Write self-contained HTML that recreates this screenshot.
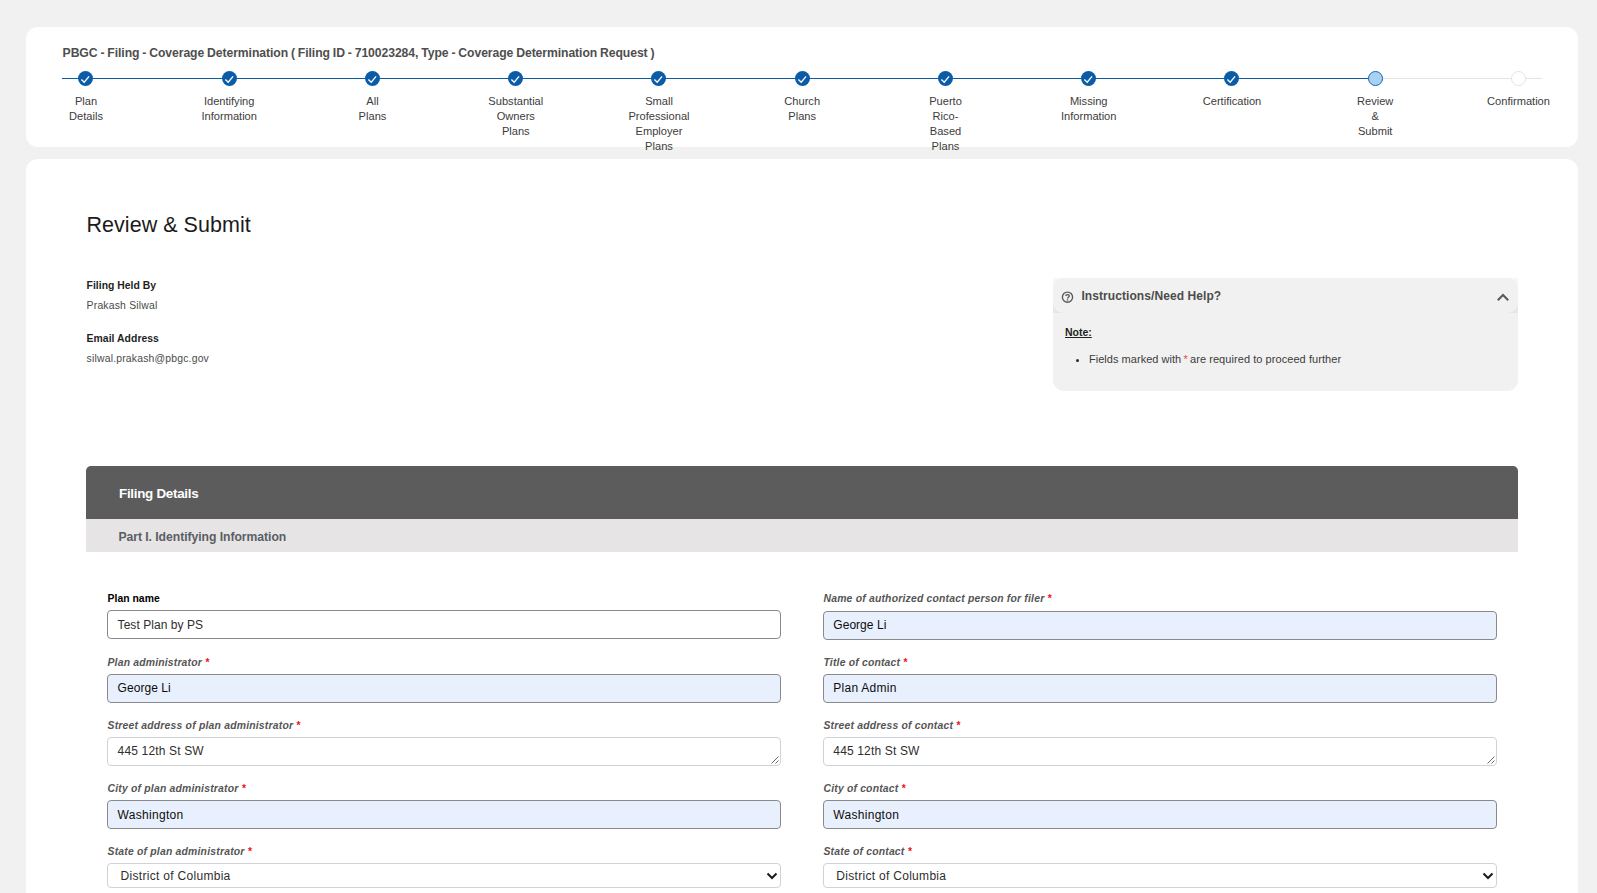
<!DOCTYPE html>
<html lang="en">
<head>
<meta charset="utf-8">
<title>Review &amp; Submit</title>
<style>
*{box-sizing:border-box;margin:0;padding:0}
html,body{width:1597px;height:893px;overflow:hidden;background:#f1f1f1;font-family:"Liberation Sans",sans-serif;color:#1b1b1b}
.abs{position:absolute}
.t{position:absolute;white-space:nowrap}
.card{position:absolute;background:#fff;border-radius:12px}
#c1{left:26px;top:27px;width:1552px;height:120px}
#c2{left:26px;top:158.5px;width:1552px;height:760px}
.ln{position:absolute;height:1.3px;top:77.8px}
.st{position:absolute;top:70.9px;width:15.2px;height:15.2px;border-radius:50%}
.st.done{background:#0b5ca6}
.st.cur{background:#a9d1f1;border:1.5px solid #1668b2}
.st.nxt{background:#fff;border:1.3px solid #e3e3e3}
.st svg{position:absolute;left:0;top:0}
.sl{position:absolute;top:94px;width:130px;text-align:center;font-size:11.1px;line-height:15px;color:#3c3c3c}
#hb{left:1053px;top:278px;width:465px;height:112.6px;background:#f1f1f1;border-radius:0 0 11px 11px}
#hh{left:1053px;top:278px;width:465px;height:34.7px;background:#f1f1f1;border-radius:10.5px}
#hg{left:1053px;top:278px;width:465px;height:34.7px;background:linear-gradient(#f8f8f8,#e5e5e5)}
#nt{text-decoration:underline}
#nb{left:1075.8px;top:358.6px;width:3.4px;height:3.4px;border-radius:50%;background:#2b2b2b}
#nstar{left:1183.6px;top:352px;font-size:11px;line-height:14px;color:#e5484d}
#fd{left:86px;top:466px;width:1432px;height:52.7px;background:#5c5c5c;border-radius:5px 5px 0 0}
#sh{left:86px;top:518.7px;width:1432px;height:33px;background:#e6e4e5}
.star{color:#f01018;font-size:10.4px;line-height:14px;font-weight:bold}
.in{position:absolute;width:674px;border:1px solid #8a8a8a;border-radius:4px;background:#fff}
.in.af{background:#e8f0fe}
.in.ta{border-color:#cfd3d8}
.in.se{border-color:#cfd3d8}
.rz{position:absolute;right:1px;bottom:1px}
.cv{position:absolute;right:1.8px;top:7.6px}
</style>
</head>
<body>
<div class="card" id="c1"></div>
<div class="card" id="c2"></div>
<div id="steps">
<div class="ln" style="left:62px;width:1312.8px;background:#0b5ca6"></div>
<div class="ln" style="left:1374.8px;width:167.2px;background:#e4e4e4"></div>
<div class="st done" style="left:78px"><svg width="15.2" height="15.2" viewBox="0 0 15.2 15.2"><path d="M3.4 8.6 L6.2 11.2 L11.1 5.3" fill="none" stroke="#fff" stroke-width="1.3"/></svg></div>
<div class="sl" style="left:21.0px">Plan<br>Details</div>
<div class="st done" style="left:222px"><svg width="15.2" height="15.2" viewBox="0 0 15.2 15.2"><path d="M3.4 8.6 L6.2 11.2 L11.1 5.3" fill="none" stroke="#fff" stroke-width="1.3"/></svg></div>
<div class="sl" style="left:164.2px">Identifying<br>Information</div>
<div class="st done" style="left:365px"><svg width="15.2" height="15.2" viewBox="0 0 15.2 15.2"><path d="M3.4 8.6 L6.2 11.2 L11.1 5.3" fill="none" stroke="#fff" stroke-width="1.3"/></svg></div>
<div class="sl" style="left:307.5px">All<br>Plans</div>
<div class="st done" style="left:508px"><svg width="15.2" height="15.2" viewBox="0 0 15.2 15.2"><path d="M3.4 8.6 L6.2 11.2 L11.1 5.3" fill="none" stroke="#fff" stroke-width="1.3"/></svg></div>
<div class="sl" style="left:450.8px">Substantial<br>Owners<br>Plans</div>
<div class="st done" style="left:651px"><svg width="15.2" height="15.2" viewBox="0 0 15.2 15.2"><path d="M3.4 8.6 L6.2 11.2 L11.1 5.3" fill="none" stroke="#fff" stroke-width="1.3"/></svg></div>
<div class="sl" style="left:594.0px">Small<br>Professional<br>Employer<br>Plans</div>
<div class="st done" style="left:795px"><svg width="15.2" height="15.2" viewBox="0 0 15.2 15.2"><path d="M3.4 8.6 L6.2 11.2 L11.1 5.3" fill="none" stroke="#fff" stroke-width="1.3"/></svg></div>
<div class="sl" style="left:737.2px">Church<br>Plans</div>
<div class="st done" style="left:938px"><svg width="15.2" height="15.2" viewBox="0 0 15.2 15.2"><path d="M3.4 8.6 L6.2 11.2 L11.1 5.3" fill="none" stroke="#fff" stroke-width="1.3"/></svg></div>
<div class="sl" style="left:880.5px">Puerto<br>Rico-<br>Based<br>Plans</div>
<div class="st done" style="left:1081px"><svg width="15.2" height="15.2" viewBox="0 0 15.2 15.2"><path d="M3.4 8.6 L6.2 11.2 L11.1 5.3" fill="none" stroke="#fff" stroke-width="1.3"/></svg></div>
<div class="sl" style="left:1023.7px">Missing<br>Information</div>
<div class="st done" style="left:1224px"><svg width="15.2" height="15.2" viewBox="0 0 15.2 15.2"><path d="M3.4 8.6 L6.2 11.2 L11.1 5.3" fill="none" stroke="#fff" stroke-width="1.3"/></svg></div>
<div class="sl" style="left:1167.0px">Certification</div>
<div class="st cur" style="left:1368px"></div>
<div class="sl" style="left:1310.2px">Review<br>&amp;<br>Submit</div>
<div class="st nxt" style="left:1511px"></div>
<div class="sl" style="left:1453.5px">Confirmation</div>
</div>
<div class="abs" id="hb"></div>
<div class="abs" id="hg"></div>
<div class="abs" id="hh"></div>
<svg class="abs" style="left:1061.1px;top:291.1px" width="13" height="13" viewBox="0 0 13 13"><circle cx="6.5" cy="6.2" r="5.1" fill="none" stroke="#5a5a5a" stroke-width="1.4"/><path d="M4.8 5.1 C4.8 3.1 8.2 3.1 8.2 5.0 C8.2 6.2 6.5 6.2 6.5 7.5" fill="none" stroke="#5a5a5a" stroke-width="1.4"/><rect x="5.8" y="8.2" width="1.4" height="1.4" fill="#5a5a5a"/></svg>
<svg class="abs" style="left:1496px;top:292.2px" width="14" height="10" viewBox="0 0 14 10"><path d="M1.8 8.2 L7 3 L12.2 8.2" fill="none" stroke="#575757" stroke-width="2"/></svg>
<div class="abs" id="nb"></div>
<div class="t" id="nstar">*</div>
<div class="abs" id="fd"></div>
<div class="abs" id="sh"></div>
<div id="texts">
<div class="t" id="ttl" style="left:62.6px;top:45.00px;font-size:12.2px;line-height:16px;font-weight:bold;font-style:normal;color:#4e4e4e;letter-spacing:-0.080px;word-spacing:-0.359px;">PBGC - Filing - Coverage Determination ( Filing ID - 710023284, Type - Coverage Determination Request )</div>
<div class="t" id="h1" style="left:86.5px;top:211.00px;font-size:21.5px;line-height:28px;font-weight:normal;font-style:normal;color:#1b1b1b;letter-spacing:0.036px;word-spacing:0.000px;">Review &amp; Submit</div>
<div class="t" id="f1" style="left:86.6px;top:279.00px;font-size:10.4px;line-height:14px;font-weight:bold;font-style:normal;color:#1f1f1f;letter-spacing:0.017px;word-spacing:0.000px;">Filing Held By</div>
<div class="t" id="f2" style="left:86.6px;top:299.00px;font-size:10.4px;line-height:14px;font-weight:normal;font-style:normal;color:#4a4a4a;letter-spacing:0.196px;word-spacing:0.000px;">Prakash Silwal</div>
<div class="t" id="f3" style="left:86.6px;top:332.00px;font-size:10.4px;line-height:14px;font-weight:bold;font-style:normal;color:#1f1f1f;letter-spacing:0.041px;word-spacing:0.000px;">Email Address</div>
<div class="t" id="f4" style="left:86.6px;top:352.00px;font-size:10.4px;line-height:14px;font-weight:normal;font-style:normal;color:#4a4a4a;letter-spacing:0.192px;word-spacing:0.000px;">silwal.prakash@pbgc.gov</div>
<div class="t" id="ht" style="left:1081.4px;top:288.00px;font-size:12.0px;line-height:16px;font-weight:bold;font-style:normal;color:#4c4c4c;letter-spacing:0.081px;word-spacing:0.000px;">Instructions/Need Help?</div>
<div class="t" id="nt" style="left:1065.0px;top:325.00px;font-size:10.5px;line-height:14px;font-weight:bold;font-style:normal;color:#1f1f1f;letter-spacing:-0.010px;word-spacing:0.000px;">Note:</div>
<div class="t" id="nx1" style="left:1089.0px;top:352.00px;font-size:11.0px;line-height:14px;font-weight:normal;font-style:normal;color:#3c3c3c;letter-spacing:0.029px;word-spacing:0.000px;">Fields marked with</div>
<div class="t" id="nx2" style="left:1190.0px;top:352.00px;font-size:11.0px;line-height:14px;font-weight:normal;font-style:normal;color:#3c3c3c;letter-spacing:0.063px;word-spacing:0.000px;">are required to proceed further</div>
<div class="t" id="fdt" style="left:119.0px;top:485.00px;font-size:13.4px;line-height:17px;font-weight:bold;font-style:normal;color:#ffffff;letter-spacing:-0.280px;word-spacing:0.000px;">Filing Details</div>
<div class="t" id="sht" style="left:118.4px;top:529.00px;font-size:12.2px;line-height:16px;font-weight:bold;font-style:normal;color:#5a5e64;letter-spacing:-0.046px;word-spacing:0.000px;">Part I. Identifying Information</div>
</div>
<div id="form">
<div class="t" id="lb0" style="left:107.6px;top:592.00px;font-size:10.4px;line-height:14px;font-weight:bold;font-style:normal;color:#000;letter-spacing:0.016px;word-spacing:0.000px;">Plan name</div>
<div class="t" id="lb1" style="left:107.5px;top:656.00px;font-size:10.4px;line-height:14px;font-weight:bold;font-style:italic;color:#555;letter-spacing:0.180px;word-spacing:0.000px;">Plan administrator</div>
<div class="t star" style="left:205.4px;top:656.00px">*</div>
<div class="t" id="lb2" style="left:107.5px;top:719.00px;font-size:10.4px;line-height:14px;font-weight:bold;font-style:italic;color:#555;letter-spacing:0.202px;word-spacing:0.000px;">Street address of plan administrator</div>
<div class="t star" style="left:296.6px;top:719.00px">*</div>
<div class="t" id="lb3" style="left:107.5px;top:782.00px;font-size:10.4px;line-height:14px;font-weight:bold;font-style:italic;color:#555;letter-spacing:0.198px;word-spacing:0.000px;">City of plan administrator</div>
<div class="t star" style="left:241.9px;top:782.00px">*</div>
<div class="t" id="lb4" style="left:107.5px;top:845.00px;font-size:10.4px;line-height:14px;font-weight:bold;font-style:italic;color:#555;letter-spacing:0.202px;word-spacing:0.000px;">State of plan administrator</div>
<div class="t star" style="left:248.0px;top:845.00px">*</div>
<div class="t" id="lb5" style="left:823.5px;top:592.00px;font-size:10.4px;line-height:14px;font-weight:bold;font-style:italic;color:#555;letter-spacing:0.196px;word-spacing:0.000px;">Name of authorized contact person for filer</div>
<div class="t star" style="left:1047.8px;top:592.00px">*</div>
<div class="t" id="lb6" style="left:823.5px;top:656.00px;font-size:10.4px;line-height:14px;font-weight:bold;font-style:italic;color:#555;letter-spacing:0.186px;word-spacing:0.000px;">Title of contact</div>
<div class="t star" style="left:903.6px;top:656.00px">*</div>
<div class="t" id="lb7" style="left:823.5px;top:719.00px;font-size:10.4px;line-height:14px;font-weight:bold;font-style:italic;color:#555;letter-spacing:0.194px;word-spacing:0.000px;">Street address of contact</div>
<div class="t star" style="left:956.5px;top:719.00px">*</div>
<div class="t" id="lb8" style="left:823.5px;top:782.00px;font-size:10.4px;line-height:14px;font-weight:bold;font-style:italic;color:#555;letter-spacing:0.180px;word-spacing:0.000px;">City of contact</div>
<div class="t star" style="left:901.8px;top:782.00px">*</div>
<div class="t" id="lb9" style="left:823.5px;top:845.00px;font-size:10.4px;line-height:14px;font-weight:bold;font-style:italic;color:#555;letter-spacing:0.190px;word-spacing:0.000px;">State of contact</div>
<div class="t star" style="left:907.9px;top:845.00px">*</div>
<div class="in " style="left:107px;top:610px;height:29px"></div>
<div class="t" id="iv0" style="left:117.6px;top:617.00px;font-size:12px;line-height:16px;font-weight:normal;font-style:normal;color:#2e2e2e;letter-spacing:0.049px;word-spacing:0.000px;">Test Plan by PS</div>
<div class="in af" style="left:107px;top:674px;height:28.6px"></div>
<div class="t" id="iv1" style="left:117.6px;top:680.00px;font-size:12px;line-height:16px;font-weight:normal;font-style:normal;color:#0d0d0d;letter-spacing:0.037px;word-spacing:0.000px;">George Li</div>
<div class="in ta" style="left:107px;top:737px;height:28.6px"><svg class="rz" width="9" height="9" viewBox="0 0 9 9"><path d="M8.5 1.5 L1.5 8.5 M8.5 5.5 L5.5 8.5" stroke="#6b6b6b" stroke-width="1" fill="none"/></svg></div>
<div class="t" id="iv2" style="left:117.6px;top:743.00px;font-size:12px;line-height:16px;font-weight:normal;font-style:normal;color:#2e2e2e;letter-spacing:0.158px;word-spacing:0.000px;">445 12th St SW</div>
<div class="in af" style="left:107px;top:800px;height:29px"></div>
<div class="t" id="iv3" style="left:117.6px;top:807.00px;font-size:12px;line-height:16px;font-weight:normal;font-style:normal;color:#0d0d0d;letter-spacing:0.296px;word-spacing:0.000px;">Washington</div>
<div class="in se" style="left:107px;top:863px;height:25px"><svg class="cv" width="12" height="8" viewBox="0 0 12 8"><path d="M1.5 1.5 L6 6 L10.5 1.5" stroke="#1b1b1b" stroke-width="2" fill="none"/></svg></div>
<div class="t" id="iv4" style="left:120.6px;top:868.00px;font-size:12px;line-height:16px;font-weight:normal;font-style:normal;color:#2e2e2e;letter-spacing:0.298px;word-spacing:0.000px;">District of Columbia</div>
<div class="in af" style="left:823px;top:611px;height:28.6px"></div>
<div class="t" id="iv5" style="left:833.3px;top:617.00px;font-size:12px;line-height:16px;font-weight:normal;font-style:normal;color:#0d0d0d;letter-spacing:0.037px;word-spacing:0.000px;">George Li</div>
<div class="in af" style="left:823px;top:674px;height:28.6px"></div>
<div class="t" id="iv6" style="left:833.3px;top:680.00px;font-size:12px;line-height:16px;font-weight:normal;font-style:normal;color:#0d0d0d;letter-spacing:0.266px;word-spacing:0.000px;">Plan Admin</div>
<div class="in ta" style="left:823px;top:737px;height:28.6px"><svg class="rz" width="9" height="9" viewBox="0 0 9 9"><path d="M8.5 1.5 L1.5 8.5 M8.5 5.5 L5.5 8.5" stroke="#6b6b6b" stroke-width="1" fill="none"/></svg></div>
<div class="t" id="iv7" style="left:833.3px;top:743.00px;font-size:12px;line-height:16px;font-weight:normal;font-style:normal;color:#2e2e2e;letter-spacing:0.158px;word-spacing:0.000px;">445 12th St SW</div>
<div class="in af" style="left:823px;top:800px;height:29px"></div>
<div class="t" id="iv8" style="left:833.3px;top:807.00px;font-size:12px;line-height:16px;font-weight:normal;font-style:normal;color:#0d0d0d;letter-spacing:0.296px;word-spacing:0.000px;">Washington</div>
<div class="in se" style="left:823px;top:863px;height:25px"><svg class="cv" width="12" height="8" viewBox="0 0 12 8"><path d="M1.5 1.5 L6 6 L10.5 1.5" stroke="#1b1b1b" stroke-width="2" fill="none"/></svg></div>
<div class="t" id="iv9" style="left:836.3px;top:868.00px;font-size:12px;line-height:16px;font-weight:normal;font-style:normal;color:#2e2e2e;letter-spacing:0.298px;word-spacing:0.000px;">District of Columbia</div>
</div>
</body>
</html>
